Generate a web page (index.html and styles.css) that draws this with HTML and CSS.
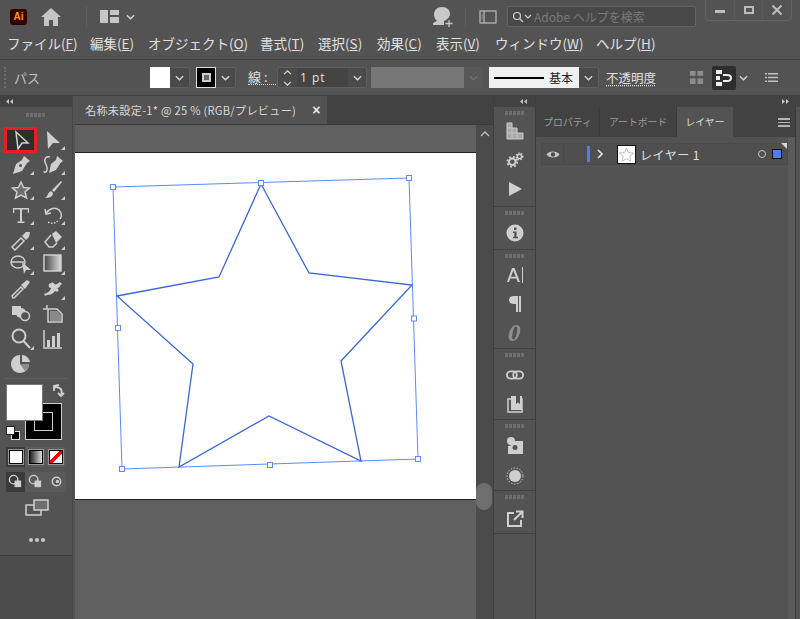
FILE: index.html
```html
<!DOCTYPE html>
<html lang="ja">
<head>
<meta charset="utf-8">
<title>Illustrator</title>
<link rel="stylesheet" href="styles.css">
</head>
<body>
<div class="app">
  <header class="titlebar">
    <div class="ai-logo">Ai</div>
    <svg class="home" viewBox="0 0 20 18"><path d="M10 0 L20 9 H17 V18 H12 V12 H8 V18 H3 V9 H0 Z"/></svg>
    <div class="vsep first"></div>
    <svg class="layout" viewBox="0 0 19 13"><path d="M0 0H8V13H0ZM10 0H19V5H10ZM10 7H19V13H10Z"/></svg>
    <svg class="chev c-title" viewBox="0 0 10 6"><path d="M1 1L5 5L9 1"/></svg>
    <div class="spacer"></div>
    <svg class="user" viewBox="0 0 22 22"><path d="M10 1C5 1 2 4 2 9C2 12 4 14 5 15L1 17V19H12V15L14 14C16 12 18 11 18 8C18 4 15 1 10 1Z"/><path class="plus" d="M17 14V21M13.500 17.500H20.500"/></svg>
    <div class="vsep second"></div>
    <svg class="panelicon" viewBox="0 0 18 14"><rect x="1" y="1" width="16" height="12"/><path d="M5 1V13"/><path class="thin" d="M2.500 5H3.800M2.500 7H3.800M2.500 9H3.800"/></svg>
    <div class="search">
      <svg class="mag" viewBox="0 0 20 12"><circle cx="5" cy="5" r="3.500"/><path d="M7.500 7.500L11 11M13 4L16 7L19 4"/></svg>
      <span>Adobe ヘルプを検索</span>
    </div>
    <div class="winbtns">
      <div class="winbtn"><svg viewBox="0 0 12 12"><rect x="1" y="6" width="10" height="3"/></svg></div>
      <div class="winbtn"><svg viewBox="0 0 12 12"><path class="box" d="M2 3H10V9H2Z"/></svg></div>
      <div class="winbtn"><svg viewBox="0 0 12 12"><path class="x" d="M1.500 1.500L10.500 10.500M10.500 1.500L1.500 10.500"/></svg></div>
    </div>
  </header>

  <nav class="menubar">
    <span class="m1">ファイル(<u>F</u>)</span>
    <span class="m2">編集(<u>E</u>)</span>
    <span class="m3">オブジェクト(<u>O</u>)</span>
    <span class="m4">書式(<u>T</u>)</span>
    <span class="m5">選択(<u>S</u>)</span>
    <span class="m6">効果(<u>C</u>)</span>
    <span class="m7">表示(<u>V</u>)</span>
    <span class="m8">ウィンドウ(<u>W</u>)</span>
    <span class="m9">ヘルプ(<u>H</u>)</span>
  </nav>

  <div class="control">
    <div class="grip-v"></div>
    <span class="ctl-label">パス</span>
    <div class="swatch-group fill-group">
      <div class="white-swatch"></div>
      <svg class="chev" viewBox="0 0 10 6"><path d="M1 1L5 5L9 1"/></svg>
    </div>
    <div class="swatch-group stroke-group">
      <div class="black-swatch"><i></i></div>
      <svg class="chev" viewBox="0 0 10 6"><path d="M1 1L5 5L9 1"/></svg>
    </div>
    <span class="stroke-label">線 :</span>
    <div class="weight">
      <div class="stepper">
        <svg viewBox="0 0 10 6"><path d="M1 5L5 1L9 5"/></svg>
        <svg viewBox="0 0 10 6"><path d="M1 1L5 5L9 1"/></svg>
      </div>
      <div class="weight-val">1 pt</div>
      <svg class="chev" viewBox="0 0 10 6"><path d="M1 1L5 5L9 1"/></svg>
    </div>
    <div class="gray-field"></div>
    <div class="gray-drop"><svg class="chev dim" viewBox="0 0 10 6"><path d="M1 1L5 5L9 1"/></svg></div>
    <div class="brush">
      <div class="brush-white"><b></b><span>基本</span></div>
      <svg class="chev" viewBox="0 0 10 6"><path d="M1 1L5 5L9 1"/></svg>
    </div>
    <span class="opacity">不透明度</span>
    <svg class="grid-ic" viewBox="0 0 16 16"><path d="M1 1H7V6H1ZM9 1H15V6H9ZM1 9H7V15H1ZM9 9H15V15H9Z"/></svg>
    <div class="align-btn"><svg viewBox="0 0 18 18"><path class="f2" d="M1 1H7V5H1ZM1 7H5V11H1ZM1 13H7V17H1Z"/><path class="s2" d="M8 6H12Q16 6 16 9Q16 12 12 12H8"/></svg></div>
    <svg class="chev c-align" viewBox="0 0 10 6"><path d="M1 1L5 5L9 1"/></svg>
    <svg class="list-ic" viewBox="0 0 13 9"><path d="M0 0H2V1.500H0ZM3 0H13V1.500H3ZM0 3.700H2V5.200H0ZM3 3.700H13V5.200H3ZM0 7.400H2V8.900H0ZM3 7.400H13V8.900H3Z"/></svg>
  </div>

  <main class="workspace">
    <aside class="tools">
      <div class="strip">
        <svg class="arrows" viewBox="0 0 7 5"><path d="M3 0V5L0 2.500ZM7 0V5L4 2.500Z"/></svg>
      </div>
      <div class="toolbox">
        <div class="grip"></div>
        <div class="toolgrid">
          <div class="tool selected"><svg viewBox="0 0 22 22"><path class="o" d="M6 3L18 14H12L8 20Z"/></svg></div>
          <div class="tool"><svg viewBox="0 0 22 22"><path class="f" d="M5 2L18 14H11L6 20Z"/></svg></div>
          <div class="tool"><svg viewBox="0 0 22 22"><path class="f" d="M14 2L20 7L17 9L12 17L3 20L6 10L12 6Z"/><circle cx="10.500" cy="11.500" r="1.500" fill="#535353"/></svg></div>
          <div class="tool"><svg viewBox="0 0 22 22"><path class="f" d="M15 2L21 7L18.500 9L14 16L7 19L9 10L14 6Z"/><path class="o" d="M8 3C4 2 2 5 3 8C4 11 6 13 5 16C4 19 2 19 2 17"/></svg></div>
          <div class="tool"><svg viewBox="0 0 22 22"><path class="star" d="M11 3L13.500 8.500L19.500 9L15 13L16.500 19L11 16L5.500 19L7 13L2.500 9L8.500 8.500Z"/></svg></div>
          <div class="tool"><svg viewBox="0 0 22 22"><path class="f" d="M19 2L20 3L12 13L10 11ZM9 12L11 14C11 18 7 19 3 19C6 18 5 14 9 12Z"/></svg></div>
          <div class="tool"><svg viewBox="0 0 22 22"><path class="f" d="M3 4H19V9H17.800V5.500H12V17.500H14.500V19H7.500V17.500H10V5.500H4.200V9H3Z"/></svg></div>
          <div class="tool"><svg viewBox="0 0 22 22"><path class="o" d="M3 5L4 10L9 9M4.500 9C7 4 14 3 17 6C20 9 20 13 18 15"/><path class="dot" d="M16 17C12 20 8 20 5 17"/></svg></div>
          <div class="tool"><svg viewBox="0 0 22 22"><path class="o" d="M4 20L2 18L11 9L14 12L5 21Z"/><path class="f" d="M12 7L16 3L20 3L19 8L16 11Z"/></svg></div>
          <div class="tool"><svg viewBox="0 0 22 22"><path class="f" d="M10 5L14 2L20 8L14 14Z"/><path class="o" d="M9 6L3 13L7 18H11L15 14"/></svg></div>
          <div class="tool"><svg viewBox="0 0 22 22"><ellipse class="o" cx="8" cy="9" rx="7" ry="6"/><path class="o" d="M1 9H14"/><path class="f" d="M12 9L21 17H16L14 21Z"/></svg></div>
          <div class="tool"><svg viewBox="0 0 22 22"><defs><linearGradient id="grad"><stop offset="0" stop-color="#444"/><stop offset="1" stop-color="#ddd"/></linearGradient></defs><rect x="2" y="2" width="17" height="16" fill="url(#grad)" stroke="#cfcfcf" stroke-width="1.500"/></svg></div>
          <div class="tool nocorner"><svg viewBox="0 0 22 22"><path class="o" d="M3 20L2 18L11 9L13 11L4 20Z"/><path class="f" d="M11 7L17 2L20 4L15 11Z"/></svg></div>
          <div class="tool"><svg viewBox="0 0 22 22"><path class="f" d="M9 5C12 3 12 8 15 6L18 4L20 6C17 8 18 10 15 10C18 12 16 15 13 13C11 16 8 17 5 17L3 18L2 16C6 15 9 12 9 10C7 10 6 8 7 6Z"/></svg></div>
          <div class="tool nocorner"><svg viewBox="0 0 22 22"><rect class="f" x="2" y="3" width="9" height="9"/><circle class="f" cx="11" cy="10" r="5"/><circle class="o fillbg" cx="15" cy="13" r="4.500"/></svg></div>
          <div class="tool nocorner"><svg viewBox="0 0 22 22"><path class="o" d="M5 2V6M1 6H5M6 6H15L20 11V19H6Z"/><path class="f" d="M8 8H15L19 12V18H8Z" opacity=".45"/></svg></div>
          <div class="tool"><svg viewBox="0 0 22 22"><circle class="o wide" cx="9" cy="8" r="6.500"/><path class="wide" d="M13.500 13L20 20"/></svg></div>
          <div class="tool nocorner"><svg viewBox="0 0 22 22"><path class="o" d="M2 2V20H20"/><path class="f" d="M5 12H8V19H5ZM10 8H13V19H10ZM15 5H18V19H15Z"/></svg></div>
          <div class="tool pie"><svg viewBox="0 0 22 22"><path class="f" d="M10 2V11H19C19 16 15 20 10 20C5 20 1 16 1 11C1 6 5 2 10 2Z"/><path class="f" d="M12 2C16 2 19 5 20 9H12Z"/><path d="M10 11H19C19 14 18 16 15 18Z" fill="#8b8b8b"/></svg></div>
        </div>
        <div class="hsep"></div>
        <div class="colors">
          <div class="stroke-big"><i></i></div>
          <div class="fill-big"></div>
          <svg class="swap" viewBox="0 0 14 14"><path d="M3 5C3 3 6 2 10 5M8 1L3 2L3 7M10 12C11 9 11 7 10 5M7 9L10 12L13 9" fill="none"/></svg>
          <div class="default-mini"><i></i><b></b></div>
        </div>
        <div class="modegroup">
          <div class="mode active"><i class="m-white"></i></div>
          <div class="mode"><i class="m-grad"></i></div>
          <div class="mode"><i class="m-none"></i></div>
        </div>
        <div class="modegroup draw">
          <div class="mode active"><svg viewBox="0 0 16 16"><circle cx="6" cy="6" r="4.500" class="o"/><rect x="7" y="7" width="7" height="7" class="f"/></svg></div>
          <div class="mode"><svg viewBox="0 0 16 16"><circle cx="6" cy="6" r="4.500" class="o"/><rect x="7" y="7" width="7" height="7" class="f"/></svg></div>
          <div class="mode"><svg viewBox="0 0 16 16"><circle cx="8" cy="8" r="4.500" class="o"/><circle cx="9" cy="8" r="1.800" class="f"/></svg></div>
        </div>
        <svg class="screen" viewBox="0 0 24 17"><rect x="1" y="6" width="15" height="10" class="o"/><rect x="9" y="1" width="14" height="10" class="o2"/></svg>
        <div class="more"><i></i><i></i><i></i></div>
      </div>
      <div class="tools-foot"></div>
    </aside>

    <section class="doc">
      <div class="tabs">
        <div class="tab"><span>名称未設定-1* @ 25 % (RGB/プレビュー)</span><em>×</em></div>
      </div>
      <div class="canvas-row">
        <div class="canvas">
          <div class="artboard">
            <svg class="art" viewBox="75 153 401 346">
              <path class="bbox" d="M113 187L409 178L418 459L122 469Z"/>
              <path class="shape" d="M261 184L309 273L412 285L341 361L361 461L269 416L179 467L193 364L117 296L219 277Z"/>
              <g class="handles">
                <rect x="110.500" y="184.500" width="5" height="5"/><rect x="258.500" y="180.500" width="5" height="5"/><rect x="406.500" y="175.500" width="5" height="5"/><rect x="411.500" y="316" width="5" height="5"/><rect x="415.500" y="456.500" width="5" height="5"/><rect x="267.500" y="462.500" width="5" height="5"/><rect x="119.500" y="466.500" width="5" height="5"/><rect x="115.500" y="325.500" width="5" height="5"/>
              </g>
            </svg>
          </div>
        </div>
        <div class="vscroll">
          <svg class="up" viewBox="0 0 10 6"><path d="M1 5L5 1L9 5"/></svg>
          <div class="thumb"></div>
        </div>
      </div>
    </section>

    <aside class="dock">
      <div class="strip dockstrip">
        <svg class="arrows" viewBox="0 0 7 5"><path d="M3 0V5L0 2.500ZM7 0V5L4 2.500Z"/></svg>
      </div>
      <div class="dockgroup g1">
        <div class="grip"></div>
        <svg viewBox="0 0 18 18"><path d="M1 1H6V6H11V11H17V17H1Z" fill="#a8a8a8" stroke="#d0d0d0" stroke-width="1"/><path d="M1 6H6V17M1 11H11V17" fill="none" stroke="#d0d0d0" stroke-width=".7"/></svg>
        <svg viewBox="0 0 20 18"><circle class="gear-c" cx="7" cy="11" r="3.600"/><circle class="gear" cx="7" cy="11" r="5.500"/><circle class="gear-c thin" cx="15" cy="5" r="2.400"/><circle class="gear small" cx="15" cy="5" r="3.700"/></svg>
        <svg viewBox="0 0 18 18"><path class="f" d="M3 2L16 9L3 16Z"/></svg>
      </div>
      <div class="dockgroup g2">
        <div class="grip"></div>
        <svg viewBox="0 0 18 18"><circle class="f" cx="9" cy="9" r="8.500"/><path d="M8 3.500H10.500V6H8ZM7 7.500H10.500V12.800H12V14.300H7V12.800H8.300V9H7Z" fill="#535353"/></svg>
      </div>
      <div class="dockgroup g3">
        <div class="grip"></div>
        <svg viewBox="0 0 18 18"><path class="f" d="M6 2H8.500L14 16H11.800L10.500 12.500H4.300L3 16H1ZM7.300 4.500L5 10.800H9.800Z" fill-rule="evenodd"/><path class="f" d="M16 1H17V17H16Z"/></svg>
        <svg viewBox="0 0 18 18"><path class="f" d="M12 1V17H10V9H8C5 9 3 7.500 3 5C3 2.500 5 1 8 1ZM13 1H15V17H13Z"/></svg>
        <svg viewBox="0 0 18 18"><path class="f fe" d="M10 1C14 1 15 4 14 8C13 13 10 17 7 17C3 17 2 14 3 10C4 5 7 1 10 1ZM10 2.500C8.500 2.500 7 6 6.500 10C6 13 6 15.500 7.500 15.500C9 15.500 10.500 12 11 8C11.500 5 11.500 2.500 10 2.500Z"/></svg>
      </div>
      <div class="dockgroup g4">
        <div class="grip"></div>
        <svg viewBox="0 0 20 14"><rect class="link" x="1" y="3" width="11" height="8" rx="4"/><rect class="link" x="8" y="3" width="11" height="8" rx="4"/></svg>
        <svg viewBox="0 0 18 18"><path class="o" d="M2 4H16V17H2Z"/><path class="f" d="M5 1H16V15H5Z"/><path d="M10 1H14V9L12 7.500L10 9Z" fill="#535353"/></svg>
      </div>
      <div class="dockgroup g5">
        <div class="grip"></div>
        <svg viewBox="0 0 18 18"><path class="f" d="M6 4H17V17H2V9C5 9 7 7 6 4Z"/><path d="M9 8A2.500 2.500 0 1 0 9 13A2.500 2.500 0 1 0 9 8" fill="#535353"/><circle class="f" cx="5" cy="4" r="4"/></svg>
        <svg viewBox="0 0 18 18"><circle class="f" cx="9" cy="9" r="6"/><circle class="dashc" cx="9" cy="9" r="8"/></svg>
      </div>
      <div class="dockgroup g6">
        <div class="grip"></div>
        <svg viewBox="0 0 18 18"><path class="o wide" d="M8 3H2V16H15V10"/><path class="o wide" d="M8 10L16 2M10 1.500H16.500V8"/></svg>
      </div>
    </aside>

    <aside class="panel">
      <div class="strip right">
        <svg class="arrows" viewBox="0 0 7 5"><path d="M0 0V5L3 2.500ZM4 0V5L7 2.500Z"/></svg>
      </div>
      <div class="ptabs">
        <div class="ptab t1">プロパティ</div>
        <div class="ptab t2">アートボード</div>
        <div class="ptab t3 on">レイヤー</div>
        <div class="hamb"><i></i><i></i><i></i></div>
      </div>
      <div class="pbody">
        <div class="plist">
          <div class="layer">
            <div class="eye"><svg viewBox="0 0 14 9"><path d="M0.500 4.500C3 0.500 11 0.500 13.500 4.500C11 8.500 3 8.500 0.500 4.500Z" fill="#c8c8c8"/><circle cx="7" cy="4.500" r="2.200" fill="#4c4c4c"/></svg></div>
            <div class="lock"></div>
            <div class="colorbar"></div>
            <svg class="expand" viewBox="0 0 6 10"><path d="M1 1L5 5L1 9"/></svg>
            <div class="thumbnail"><svg viewBox="0 0 18 18"><path d="M9 2L11 7L16.500 7.500L12.500 11L13.500 16L9 13.500L4.500 16L5.500 11L1.500 7.500L7 7Z"/></svg></div>
            <span class="lname">レイヤー 1</span>
            <div class="target"></div>
            <div class="selbox"></div>
            <div class="corner"></div>
          </div>
        </div>
        <div class="pscroll"></div>
      </div>
    </aside>
  </main>
</div>
</body>
</html>
```

FILE: styles.css
```css
* { box-sizing: border-box; }
html, body { margin: 0; padding: 0; }
body { width: 800px; height: 619px; overflow: hidden; background: #535353; font-family: "Noto Sans CJK JP", "Noto Sans", sans-serif; color: #d0d0d0; }
svg { display: block; }
.app { width: 800px; height: 619px; display: flex; flex-direction: column; }
.spacer { flex: 1; }

/* title bar */
.titlebar { height: 33px; display: flex; align-items: center; background: #535353; padding-left: 10px; }
.ai-logo { width: 17px; height: 16px; border-radius: 3px; background: #330000; color: #ff9a00; font: bold 10px/16px "Liberation Sans", sans-serif; text-align: center; }
.home { width: 20px; height: 18px; margin-left: 14px; fill: #c4c4c4; }
.vsep { width: 1px; height: 22px; background: #5f5f5f; }
.vsep.first { margin-left: 25px; }
.layout { width: 19px; height: 13px; margin-left: 13px; fill: #c6c6c6; }
.chev { width: 9px; height: 6px; fill: none; stroke: #d8d8d8; stroke-width: 1.500; flex: none; }
.c-title { margin-left: 7px; }
.user { width: 22px; height: 22px; fill: #c8c8c8; }
.user .plus { stroke: #c8c8c8; stroke-width: 1.300; fill: none; }
.vsep.second { margin: 0 13px 0 11px; height: 20px; }
.panelicon { width: 18px; height: 14px; fill: none; stroke: #bdbdbd; stroke-width: 1.200; margin-right: 10px; }
.panelicon .thin { stroke-width: 0.800; }
.search { width: 189px; height: 21px; border: 1px solid #636363; border-radius: 2px; background: #484848; display: flex; align-items: center; padding-left: 4px; gap: 2px; font-size: 12px; color: #787878; margin-right: 9px; }
.mag { width: 20px; height: 12px; fill: none; stroke: #d0d0d0; stroke-width: 1.200; }
.winbtns { display: flex; align-self: flex-start; width: 87px; height: 21px; border: 1px solid #626262; border-top: 0; border-radius: 0 0 5px 5px; margin-right: 8px; }
.winbtn { flex: 1; display: flex; align-items: center; justify-content: center; border-right: 1px solid #5b5b5b; }
.winbtn:last-child { border-right: 0; }
.winbtn svg { width: 12px; height: 12px; fill: #bcbcbc; }
.winbtn .box { fill: none; stroke: #bcbcbc; stroke-width: 2; }
.winbtn .x { fill: none; stroke: #bcbcbc; stroke-width: 2; }

/* menu */
.menubar { height: 27px; display: flex; align-items: center; padding: 0 0 6px 7px; background: #535353; font-size: 13.500px; color: #e0e0e0; white-space: nowrap; border-bottom: 1px solid #444; }
.menubar span { display: block; }
.m1 { width: 83px; } .m2 { width: 58px; } .m3 { width: 112px; } .m4 { width: 58px; }
.m5 { width: 59px; } .m6 { width: 59px; } .m7 { width: 59px; } .m8 { width: 101px; } .m9 { width: 70px; }

/* control bar */
.control { height: 36px; display: flex; align-items: center; background: #535353; border-bottom: 1px solid #3f3f3f; position: relative; }
.grip-v { width: 2px; height: 21px; margin-left: 4px; border-left: 2px dotted #6b6b6b; }
.ctl-label { width: 136px; margin-left: 8px; font-size: 13px; color: #c4c4c4; }
.swatch-group { height: 21px; display: flex; align-items: center; border: 1px solid #5f5f5f; border-radius: 2px; background: #4a4a4a; }
.fill-group { width: 40px; }
.stroke-group { width: 40px; margin-left: 6px; }
.white-swatch { width: 20px; height: 21px; background: #fff; margin: -1px 5px -1px -1px; flex: none; }
.black-swatch { width: 20px; height: 21px; margin: -1px 5px -1px -1px; background: #000; border: 1px solid #ddd; display: flex; align-items: center; justify-content: center; flex: none; }
.black-swatch i { width: 9px; height: 9px; border: 2px solid #ccc; background: #666; display: block; }
.stroke-label { margin-left: 12px; width: 28px; font-size: 13px; color: #e0e0e0; border-bottom: 1px dotted #ccc; line-height: 14px; white-space: nowrap; }
.weight { margin-left: 1px; width: 90px; height: 21px; display: flex; align-items: center; border: 1px solid #5f5f5f; border-radius: 2px; background: #4a4a4a; }
.stepper { width: 19px; display: flex; flex-direction: column; gap: 6px; align-items: center; }
.stepper svg { width: 9px; height: 5px; fill: none; stroke: #d8d8d8; stroke-width: 1.500; }
.weight-val { width: 51px; height: 19px; background: #444; font: 12px/19px "Open Sans", sans-serif; color: #e0e0e0; padding-left: 3px; margin-right: 5px; letter-spacing: 1px; }
.gray-field { width: 93px; height: 21px; margin-left: 4px; background: #777; }
.gray-drop { width: 19px; height: 21px; background: #585858; display: flex; align-items: center; justify-content: center; margin-right: 6px; }
.chev.dim { stroke: #6f6f6f; }
.brush { width: 110px; height: 21px; display: flex; align-items: center; border: 1px solid #5f5f5f; border-radius: 2px; background: #4a4a4a; }
.brush-white { width: 90px; height: 21px; margin: -1px 5px -1px -1px; background: #f0f0f0; display: flex; align-items: center; flex: none; padding-left: 5px; color: #222; font-size: 12px; }
.brush-white b { width: 50px; height: 2px; background: #000; margin-right: 5px; }
.opacity { margin-left: 7px; width: 83px; font-size: 12.500px; color: #e0e0e0; text-decoration: underline dotted; text-underline-offset: 2px; white-space: nowrap; }
.grid-ic { width: 15px; height: 15px; fill: #8e8e8e; }
.align-btn { width: 24px; height: 24px; margin-left: 8px; background: #2e2e2e; border-radius: 2px; display: flex; align-items: center; justify-content: center; }
.align-btn svg { width: 18px; height: 18px; }
.f2 { fill: #eee; }
.s2 { fill: none; stroke: #eee; stroke-width: 2; }
.c-align { margin-left: 3px; }
.list-ic { width: 13px; height: 9px; margin-left: 17px; fill: #c0c0c0; }

/* workspace */
.workspace { flex: 1; min-height: 0; display: flex; }
.strip { height: 11px; background: #424242; display: flex; align-items: center; flex: none; }
.arrows { width: 7px; height: 5px; fill: #c4c4c4; }
.tools { width: 73px; display: flex; flex-direction: column; border-right: 1px solid #474747; margin-right: 2px; }
.tools .strip { padding-left: 6px; }
.grip { width: 20px; height: 4px; margin: 0 auto; background: repeating-linear-gradient(90deg, #6e6e6e 0 3px, transparent 3px 4px); flex: none; }
.toolbox { height: 449px; background: #535353; border-bottom: 1px solid #3e3e3e; padding-top: 6px; display: flex; flex-direction: column; flex: none; }
.tools-foot { flex: 1; background: #4c4c4c; }
.toolgrid { display: grid; grid-template-columns: 32px 31px; grid-auto-rows: 24.900px; padding: 10.500px 0 0 5px; flex: none; }
.tool { display: flex; align-items: center; justify-content: center; position: relative; }
.tool svg { width: 22px; height: 22px; }
.tool::after { content: ""; position: absolute; right: 3px; bottom: 2px; border: 2px solid transparent; border-right-color: #ccc; border-bottom-color: #ccc; }
.tool.nocorner::after, .tool.selected::after, .tool.pie::after { display: none; }
.tool.selected { outline: 3px solid #ed1c24; outline-offset: -3px; background: #2e2e2e; margin: -0.500px 0 0 -1px; width: 33px; height: 26px; }
.f { fill: #cfcfcf; }
.o { fill: none; stroke: #cfcfcf; stroke-width: 1.500; }
.o2 { fill: #6f6f6f; stroke: #cfcfcf; stroke-width: 1.500; }
.fillbg { fill: #535353; }
.wide { fill: none; stroke: #cfcfcf; stroke-width: 2; }
.dot { fill: none; stroke: #cfcfcf; stroke-width: 1.500; stroke-dasharray: 1.500 1.500; }
.star { fill: #6e6e6e; stroke: #cfcfcf; stroke-width: 1.500; }
.hsep { height: 1px; background: #5f5f5f; margin: 1.500px 4px 0; flex: none; }
.colors { position: relative; height: 63px; margin: 5px 0 0 6px; flex: none; }
.fill-big { position: absolute; left: 0; top: 0; width: 37px; height: 37px; background: #fff; border: 1px solid #777; }
.stroke-big { position: absolute; left: 19px; top: 19px; width: 37px; height: 37px; background: #000; border: 1px solid #cfcfcf; }
.stroke-big i { position: absolute; left: 8px; top: 8px; width: 19px; height: 19px; border: 1px solid #cfcfcf; }
.swap { position: absolute; left: 45px; top: 0; width: 14px; height: 14px; stroke: #cfcfcf; stroke-width: 1.800; }
.default-mini { position: absolute; left: 0; top: 42px; width: 14px; height: 14px; }
.default-mini i { position: absolute; right: 0; bottom: 0; width: 9px; height: 9px; background: #000; border: 1px solid #ddd; }
.default-mini b { position: absolute; left: 0; top: 0; width: 9px; height: 9px; background: #fff; border: 1px solid #222; }
.modegroup { display: flex; gap: 1px; margin: 0 0 0 6px; width: 60px; height: 20px; flex: none; background: #5a5a5a; border-radius: 2px; }
.modegroup.draw { margin-top: 5px; }
.mode { flex: 1; display: flex; align-items: center; justify-content: center; }
.mode.active { background: #3a3a3a; }
.mode i { display: block; width: 14px; height: 14px; border: 1px solid #000; outline: 1px solid #999; }
.m-white { background: #fff; }
.m-grad { background: linear-gradient(90deg, #222, #ddd); }
.m-none { background: linear-gradient(135deg, #fff 0 38%, #f00 38% 62%, #fff 62%); }
.draw .mode svg { width: 15px; height: 15px; }
.screen { width: 24px; height: 17px; margin: 7px 0 0 25px; flex: none; }
.more { display: flex; gap: 2px; margin: 22px 0 0 29px; flex: none; }
.more i { width: 4px; height: 4px; border-radius: 50%; background: #c8c8c8; }

/* document */
.doc { width: 418px; display: flex; flex-direction: column; }
.tabs { height: 29px; background: #424242; display: flex; flex: none; border-bottom: 1px solid #3a3a3a; }
.tab { width: 252px; background: #535353; display: flex; align-items: center; padding-left: 10px; font-size: 11.200px; letter-spacing: 0.240px; color: #d8d8d8; white-space: nowrap; }
.tab em { font: bold 14px/1 "Liberation Sans", sans-serif; margin-left: 16px; color: #e8e8e8; }
.canvas-row { flex: 1; display: flex; min-height: 0; }
.canvas { width: 401px; background: #5f5f5f; padding-top: 28px; }
.artboard { width: 401px; height: 346px; background: #fff; box-shadow: 0 -1px 0 #222, 0 1px 0 #222; }
.art { width: 401px; height: 346px; }
.bbox { fill: none; stroke: #5b8cf5; stroke-width: 1; }
.shape { fill: none; stroke: #3a66d8; stroke-width: 1.300; }
.handles rect { fill: #fff; stroke: #5b8cf5; stroke-width: 1; }
.vscroll { width: 17px; background: #4b4b4b; position: relative; }
.vscroll .up { width: 10px; height: 6px; margin: 6px 0 0 4px; fill: none; stroke: #c0c0c0; stroke-width: 1.300; }
.thumb { position: absolute; left: 0; top: 358px; width: 16px; height: 27px; background: #6e6e6e; border-radius: 8px; }

/* dock */
.dock { width: 43px; display: flex; flex-direction: column; border-left: 1px solid #3e3e3e; border-right: 1px solid #3e3e3e; }
.dockstrip { justify-content: flex-end; padding-right: 8px; }
.dockgroup { display: flex; flex-direction: column; align-items: center; border-bottom: 1px solid #414141; padding-top: 4px; flex: none; background: #535353; }
.dockgroup svg { width: 18px; height: 18px; margin-top: 11px; }
.dockgroup .grip + svg { margin-top: 8px; }
.g1 { height: 100px; } .g2 { height: 43px; } .g3 { height: 99px; } .g4 { height: 71px; } .g5 { height: 71px; } .g6 { height: 43px; }
.g1 .grip + svg { margin-top: 7px; }
.g2 .grip + svg, .g4 .grip + svg, .g5 .grip + svg { margin-top: 9px; }
.g5 svg + svg { margin-top: 12px; }
.g6 .grip + svg { margin-top: 11px; }
.gear-c { fill: none; stroke: #cfcfcf; stroke-width: 2.200; }
.gear-c.thin { stroke-width: 1.500; }
.gear { fill: none; stroke: #cfcfcf; stroke-width: 2; stroke-dasharray: 2.100 2.220; }
.gear.small { stroke-width: 1.500; stroke-dasharray: 1.600 1.500; }
.fe { fill: #8f8f8f; fill-rule: evenodd; }
.link { fill: none; stroke: #d0d0d0; stroke-width: 2; }
.dashc { fill: none; stroke: #cfcfcf; stroke-width: 1; stroke-dasharray: 1.500 1.500; }

/* panel */
.panel { flex: 1; display: flex; flex-direction: column; }
.strip.right { justify-content: flex-end; padding-right: 11px; }
.ptabs { height: 30px; display: flex; background: #424242; flex: none; font-size: 9.800px; position: relative; margin-right: 4px; border-right: 1px solid #3a3a3a; }
.ptab { display: flex; align-items: center; justify-content: center; color: #9c9c9c; border-right: 1px solid #3a3a3a; }
.t1 { width: 64px; } .t2 { width: 77px; } .t3 { width: 56px; }
.ptab.on { background: #535353; color: #dedede; border-right: 0; }
.hamb { position: absolute; right: 5px; top: 11px; width: 12px; display: flex; flex-direction: column; gap: 2px; }
.hamb i { height: 1.500px; background: #b4b4b4; display: block; }
.pbody { flex: 1; display: flex; background: #535353; margin-right: 4px; border-right: 1px solid #3a3a3a; }
.plist { width: 252px; padding: 6px 0 0 5px; }
.pscroll { flex: 1; background: #5a5a5a; }
.layer { height: 22px; background: #4f4f4f; display: flex; align-items: center; position: relative; border: 1px solid #4a4a4a; }
.eye { width: 22px; height: 20px; display: flex; align-items: center; justify-content: center; border-right: 1px solid #484848; }
.eye svg { width: 14px; height: 9px; }
.lock { width: 21px; height: 20px; border-right: 1px solid #484848; }
.colorbar { width: 3px; height: 16px; margin-left: 2px; background: #4f7de8; }
.expand { width: 6px; height: 10px; margin-left: 7px; fill: none; stroke: #e0e0e0; stroke-width: 1.600; }
.thumbnail { width: 19px; height: 19px; margin-left: 14px; background: #fff; border: 1px solid #111; flex: none; }
.thumbnail svg { width: 17px; height: 17px; fill: #fff; stroke: #aaa; stroke-width: 0.800; }
.lname { margin-left: 4px; font-size: 12px; color: #e0e0e0; white-space: nowrap; letter-spacing: 0.500px; }
.target { position: absolute; left: 216px; top: 6px; width: 8px; height: 8px; border: 1px solid #c8c8c8; border-radius: 50%; }
.selbox { position: absolute; left: 231px; top: 6px; width: 8px; height: 8px; background: #4f7de8; outline: 1px solid #111; }
.corner { position: absolute; right: 0; top: -1px; border: 3.500px solid transparent; border-top-color: #d8d8d8; border-right-color: #d8d8d8; }
```
